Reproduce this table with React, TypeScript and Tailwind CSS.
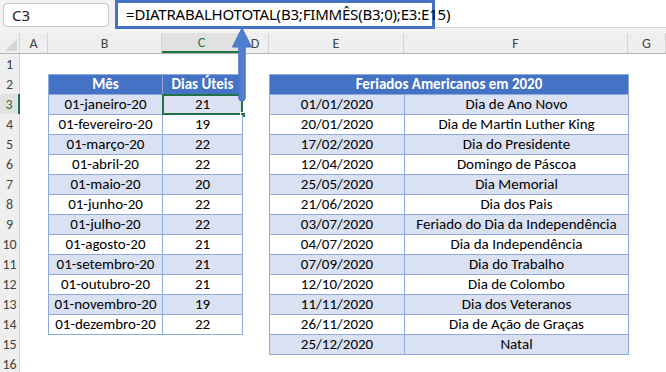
import React from 'react'

const months: [string, number][] = [
  ['01-janeiro-20', 21],
  ['01-fevereiro-20', 19],
  ['01-março-20', 22],
  ['01-abril-20', 22],
  ['01-maio-20', 20],
  ['01-junho-20', 22],
  ['01-julho-20', 22],
  ['01-agosto-20', 21],
  ['01-setembro-20', 21],
  ['01-outubro-20', 21],
  ['01-novembro-20', 19],
  ['01-dezembro-20', 22],
]

const holidays: [string, string][] = [
  ['01/01/2020', 'Dia de Ano Novo'],
  ['20/01/2020', 'Dia de Martin Luther King'],
  ['17/02/2020', 'Dia do Presidente'],
  ['12/04/2020', 'Domingo de Páscoa'],
  ['25/05/2020', 'Dia Memorial'],
  ['21/06/2020', 'Dia dos Pais'],
  ['03/07/2020', 'Feriado do Dia da Independência'],
  ['04/07/2020', 'Dia da Independência'],
  ['07/09/2020', 'Dia do Trabalho'],
  ['12/10/2020', 'Dia de Colombo'],
  ['11/11/2020', 'Dia dos Veteranos'],
  ['26/11/2020', 'Dia de Ação de Graças'],
  ['25/12/2020', 'Natal'],
]

const columns = [
  { label: 'A', w: 'w-[28px]' },
  { label: 'B', w: 'w-[114px]' },
  { label: 'C', w: 'w-[80px]', active: true },
  { label: 'D', w: 'w-[27px]' },
  { label: 'E', w: 'w-[135px]' },
  { label: 'F', w: 'w-[224px]' },
  { label: 'G', w: 'flex-1' },
]

function Cell({
  w,
  band,
  children,
  selected = false,
}: {
  w: string
  band: boolean
  children: React.ReactNode
  selected?: boolean
}) {
  return (
    <div
      className={`${w} relative h-[20px] border-r border-b border-[#8ea9db] flex items-center justify-center text-[15px] text-black ${
        band ? 'bg-[#d9e1f2]' : 'bg-white'
      }`}
    >
      {children}
      {selected && (
        <>
          <div className="absolute -left-[1px] -top-[1px] -right-[1px] -bottom-[1px] border-2 border-[#217346]" />
          <div className="absolute -right-[4px] -bottom-[4px] w-[6px] h-[6px] bg-[#217346] border border-white" />
        </>
      )}
    </div>
  )
}

function HeaderCell({ w, children }: { w: string; children: React.ReactNode }) {
  return (
    <div className={`${w} h-[20px] border-r border-b border-[#8ea9db] bg-[#4472c4] flex items-center justify-center text-[15px] font-bold text-white`}>
      {children}
    </div>
  )
}

export default function App() {
  return (
    <div className="relative w-[666px] h-[372px] overflow-hidden bg-white font-[Carlito,Calibri,Lato,sans-serif]">
      {/* name box + formula bar */}
      <div className="h-[33px] bg-[#f3f3f3] flex items-start">
        <div className="mt-[3px] ml-[3px] w-[106px] h-[24px] bg-white border border-[#c8c8c8] rounded-[4px] flex items-center pl-[8px] text-[15px] text-[#222] font-['Noto_Sans',sans-serif]">
          C3
        </div>
        <div className="ml-[6px] flex-1 h-[28px] bg-white border-b border-[#d6d6d6]">
          <div className="w-[320px] h-[29px] border-[3px] border-[#4472c4] bg-white flex items-center pl-[8px] text-[15px] text-black font-['Noto_Sans',sans-serif] tracking-[-0.2px]">
            =DIATRABALHOTOTAL(B3;FIMMÊS(B3;0);E3:E15)
          </div>
        </div>
      </div>

      {/* column headers */}
      <div className="flex h-[21px] bg-[#efefef] border-b border-[#b5b5b5]">
        <div className="w-[20px] h-full border-r border-[#d4d4d4] relative overflow-hidden">
          <div className="absolute right-[2px] bottom-[2px] w-0 h-0 border-l-[12px] border-l-transparent border-b-[12px] border-b-[#d6d6d6]" />
        </div>
        {columns.map((c) => (
          <div
            key={c.label}
            className={`${c.w} h-full flex items-center justify-center text-[14px] border-r border-[#d4d4d4] ${
              c.active ? 'bg-[#e1e1e1] text-[#217346] border-b-2 border-b-[#217346]' : 'text-[#444]'
            }`}
          >
            {c.label}
          </div>
        ))}
      </div>

      {/* sheet body */}
      <div className="flex">
        <div className="w-[20px] bg-[#efefef] border-r border-[#d4d4d4] flex flex-col">
          {Array.from({ length: 16 }, (_, i) => i + 1).map((n) => (
            <div
              key={n}
              className={`h-[20px] flex items-center justify-center text-[14px] ${
                n === 3 ? 'bg-[#e1e1e1] text-[#217346] border-r-2 border-[#217346] -mr-[1px]' : 'text-[#444]'
              }`}
            >
              {n}
            </div>
          ))}
        </div>

        <div className="flex items-start pt-[20px]">
          <div className="w-[28px]" />
          <div className="flex flex-col border-l border-t border-[#8ea9db]">
            <div className="flex">
              <HeaderCell w="w-[114px]">Mês</HeaderCell>
              <HeaderCell w="w-[80px]">Dias Úteis</HeaderCell>
            </div>
            {months.map(([m, d], i) => (
              <div key={m} className="flex">
                <Cell w="w-[114px]" band={i % 2 === 0}>{m}</Cell>
                <Cell w="w-[80px]" band={i % 2 === 0} selected={i === 0}>{d}</Cell>
              </div>
            ))}
          </div>

          <div className="w-[26px]" />
          <div className="flex flex-col border-l border-t border-[#8ea9db]">
            <HeaderCell w="w-[359px]">Feriados Americanos em 2020</HeaderCell>
            {holidays.map(([d, name], i) => (
              <div key={d} className="flex">
                <Cell w="w-[135px]" band={i % 2 === 0}>{d}</Cell>
                <Cell w="w-[224px]" band={i % 2 === 0}>{name}</Cell>
              </div>
            ))}
          </div>
        </div>
      </div>

      {/* callout arrow */}
      <svg className="absolute left-[230px] top-[26px]" width="24" height="80" viewBox="0 0 24 80">
        <path
          d="M12 2 L21.5 21 L15.2 21 L15.2 72 Q15.2 75 12 75 Q8.8 75 8.8 72 L8.8 21 L2.5 21 Z"
          fill="#4f7fcf"
          stroke="#4472c4"
          strokeWidth="1"
          strokeLinejoin="round"
        />
      </svg>
    </div>
  )
}
